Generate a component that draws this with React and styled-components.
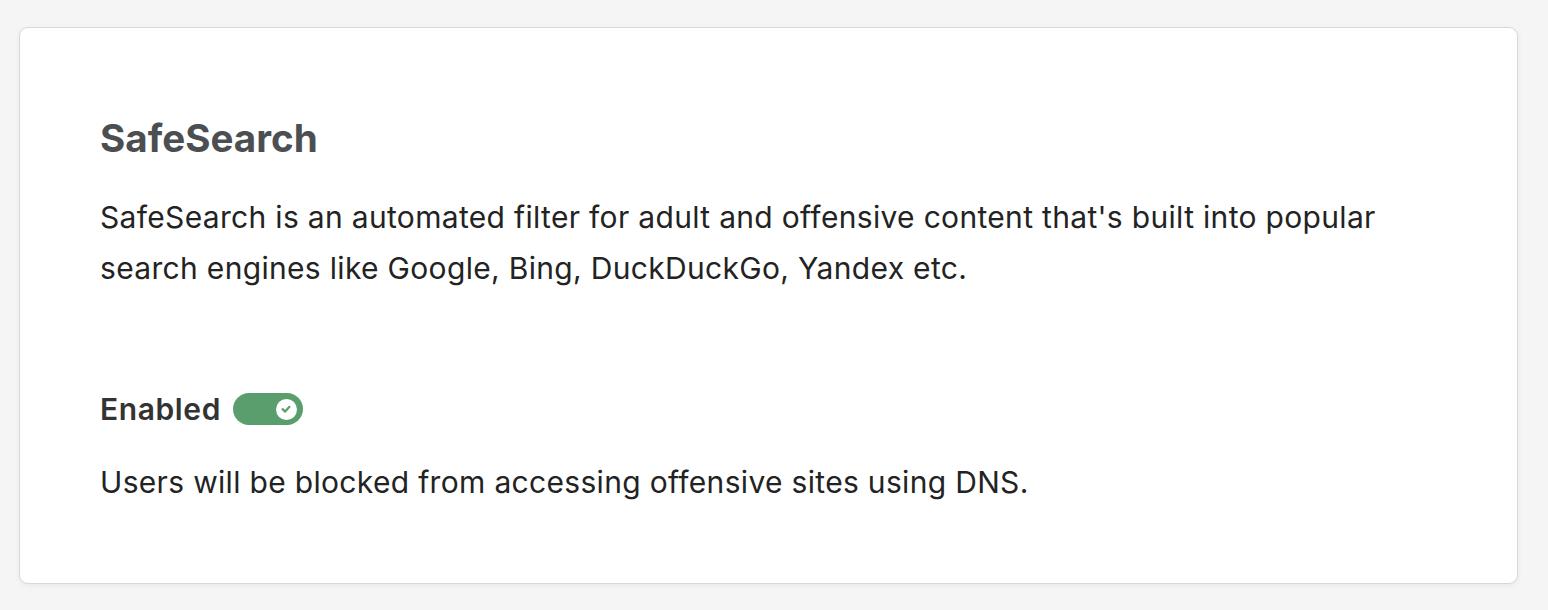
import React from "react";
import styled, { createGlobalStyle } from "styled-components";

const Global = createGlobalStyle`
  html, body { margin: 0; padding: 0; background: #f5f5f5; }
  body { font-family: Inter, "Noto Sans", sans-serif; -webkit-font-smoothing: antialiased; }
`;

const Page = styled.div`
  padding: 27px 30px 26px 19px;
  min-height: 610px;
  box-sizing: border-box;
`;

const Card = styled.section`
  background: #fff;
  border: 1px solid #d7d7d9;
  border-radius: 9px;
  box-shadow: 0 2px 6px rgba(0, 0, 0, 0.05);
  padding: 88px 80px 80px 80px;
  box-sizing: border-box;
  height: 557px;
`;

const Title = styled.h2`
  margin: 0;
  font-size: 38.6px;
  font-weight: 700;
  color: #4c4f52;
  line-height: 44px;
`;

const Text = styled.p`
  margin: ${(p) => p.$mt || 0}px 0 0;
  font-size: 30px;
  letter-spacing: 0.32px;
  line-height: 51px;
  color: #232323;
  max-width: 1320px;
`;

const Row = styled.div`
  display: flex;
  align-items: center;
  gap: 12px;
  margin-top: 97px;
  height: 36px;
`;

const Label = styled.span`
  font-size: 30px;
  font-weight: 600;
  letter-spacing: 0.6px;
  color: #333;
`;

const Toggle = styled.div`
  width: 70px;
  height: 32px;
  border-radius: 16px;
  background: #5a9e6e;
  display: flex;
  align-items: center;
  justify-content: flex-end;
  padding: 0 6px;
  box-sizing: border-box;
`;

const Knob = styled.div`
  width: 21px;
  height: 21px;
  border-radius: 50%;
  background: #fff;
  display: flex;
  align-items: center;
  justify-content: center;
`;

export default function App() {
  return (
    <>
      <Global />
      <Page>
        <Card>
          <Title>SafeSearch</Title>
          <Text $mt={32}>
            SafeSearch is an automated filter for adult and offensive content that's built into popular
            search engines like Google, Bing, DuckDuckGo, Yandex etc.
          </Text>
          <Row>
            <Label>Enabled</Label>
            <Toggle>
              <Knob>
                <svg width="12" height="12" viewBox="0 0 14 14">
                  <path d="M3 7.2 L6 10 L11 4.5" fill="none" stroke="#5a9e6e" strokeWidth="2.6" strokeLinecap="round" strokeLinejoin="round" />
                </svg>
              </Knob>
            </Toggle>
          </Row>
          <Text $mt={30}>Users will be blocked from accessing offensive sites using DNS.</Text>
        </Card>
      </Page>
    </>
  );
}
